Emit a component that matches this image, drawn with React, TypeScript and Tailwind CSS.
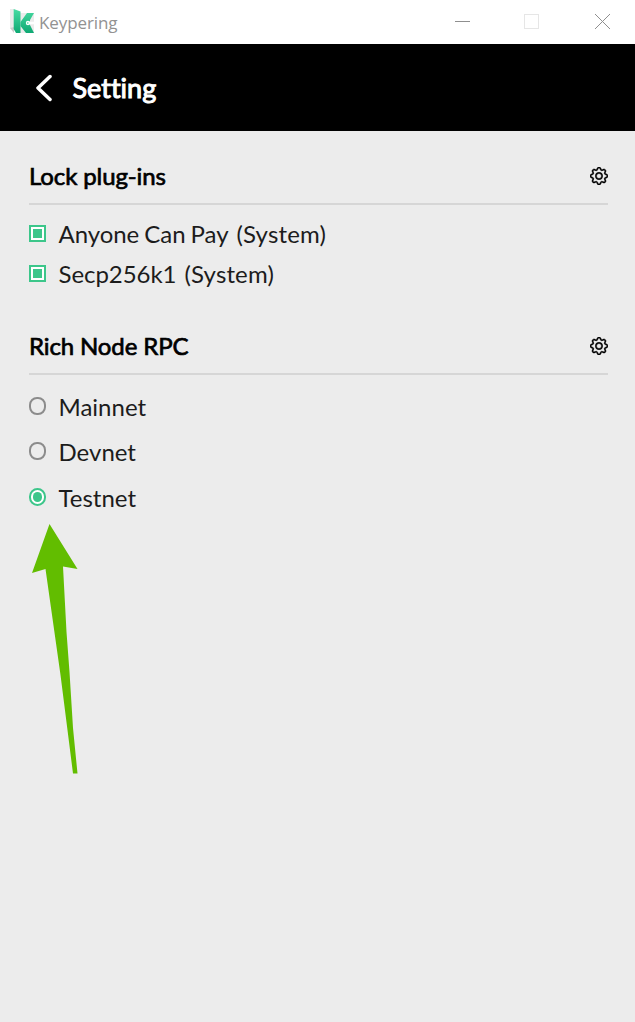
import type { ReactNode } from "react";
import { BsGear } from "react-icons/bs";

function Logo() {
  return (
    <svg width="25" height="26" viewBox="0 0 25 26" className="shrink-0">
      <defs>
        <linearGradient id="kg" gradientUnits="userSpaceOnUse" x1="0" y1="0" x2="0" y2="24">
          <stop offset="0" stopColor="#48dca3" />
          <stop offset="1" stopColor="#0fa873" />
        </linearGradient>
      </defs>
      <path d="M0 0H4V4H24V24H10L0 19Z" fill="#ebebeb" />
      <path d="M0 19L4 18V24Z" fill="#cccccc" />
      <path d="M3.700 0L10.500 2.500V24H6L3.700 20Z" fill="url(#kg)" />
      <path d="M17 4H24L20 11V16L24 24H16L10.500 17V13Z" fill="url(#kg)" />
      <circle cx="18" cy="14" r="2.200" fill="#fff" />
      <path d="M18 14H24" stroke="#fff" strokeWidth="2.500" />
      <circle cx="17.800" cy="14" r="0.800" fill="#35cf96" />
    </svg>
  );
}

function Section({ title, children }: { title: string; children: ReactNode }) {
  return (
    <section className="pr-[27px] pl-[29px]">
      <div className="flex h-[56px] items-center justify-between border-b-2 border-[#d6d6d6]">
        <h2 className="text-[24px] leading-[30px] font-normal tracking-[-0.12px] [-webkit-text-stroke:0.7px_#000]">{title}</h2>
        <BsGear className="size-[18px] stroke-black [stroke-width:0.5px]" />
      </div>
      {children}
    </section>
  );
}

function Check({ label, origin }: { label: string; origin: string }) {
  return (
    <li className="flex h-10 items-center">
      <span className="mr-[12.500px] flex size-[17px] items-center justify-center border-2 border-[#3cc68a] bg-white">
        <span className="size-[9px] bg-[#3cc68a]" />
      </span>
      <span className="pt-[2px] text-[24px] leading-[30px] tracking-[-0.05px] text-[#1c1c1c] [word-spacing:-1px]">{label}</span>
      <span className="ml-[8px] pt-[2px] text-[24px] leading-[30px] tracking-[0.15px] text-[#1c1c1c]">{origin}</span>
    </li>
  );
}

function Radio({ label, on = false }: { label: string; on?: boolean }) {
  return (
    <li className="flex h-[45.500px] items-center">
      <span
        className={
          on
            ? "mr-[12.500px] flex h-[18px] w-[17px] items-center justify-center rounded-full border-2 border-[#3cc68a] bg-white"
            : "mr-[12.500px] h-[18px] w-[17px] rounded-[8px] border-2 border-[#8c8c8c]"
        }
      >
        {on && <span className="h-[10px] w-[9px] rounded-full bg-[#3cc68a]" />}
      </span>
      <span className="pt-[2px] text-[24px] leading-[30px] text-[#1c1c1c]">{label}</span>
    </li>
  );
}

export default function App() {
  return (
    <div className="relative h-[1022px] w-full bg-[#ececec] font-['Lato',sans-serif] text-black [font-variant-ligatures:none]">
      <div className="flex h-[44px] items-center bg-white pl-[10px]">
        <Logo />
        <span className="ml-[4px] pt-[1px] font-['Open_Sans',sans-serif] text-[17px] tracking-[-0.1px] text-[#929292]">Keypering</span>
        <svg width="160" height="20" className="ml-auto mr-[22px]" fill="none" shapeRendering="crispEdges">
          <path d="M2 9.500H17" stroke="#8f8f8f" />
          <rect x="71.500" y="2.500" width="14" height="14" stroke="#e6e6e6" />
          <path d="M142 2L157 17M157 2L142 17" stroke="#8f8f8f" shapeRendering="auto" />
        </svg>
      </div>
      <header className="flex h-[87px] items-center bg-black pl-[36px] text-white">
        <svg width="17" height="28" fill="none" stroke="#fff" strokeWidth="3.500" strokeLinecap="round" strokeLinejoin="round">
          <path d="M14 2.500L2 14L14 25.500" />
        </svg>
        <h1 className="ml-[19.500px] pt-[1px] text-[27px] leading-[34px] font-normal [-webkit-text-stroke:1px_#fff]">Setting</h1>
      </header>
      <main className="pt-[18px]">
        <Section title="Lock plug-ins">
          <ul className="pt-[8px]">
            <Check label="Anyone Can Pay" origin="(System)" />
            <Check label="Secp256k1" origin="(System)" />
          </ul>
        </Section>
        <div className="pt-[26px]">
          <Section title="Rich Node RPC">
            <ul className="pt-[8px]">
              <Radio label="Mainnet" />
              <Radio label="Devnet" />
              <Radio label="Testnet" on />
            </ul>
          </Section>
        </div>
      </main>
      <svg width="46" height="250" className="absolute top-[524px] left-[32px]">
        <path d="M17.500 0L45.500 45L31 42.500L34.500 108L37.500 148L41 204L45.500 249.500H41L37 218L28.500 151L21 98L13.500 45L0 49Z" fill="#62bd00" />
      </svg>
    </div>
  );
}
